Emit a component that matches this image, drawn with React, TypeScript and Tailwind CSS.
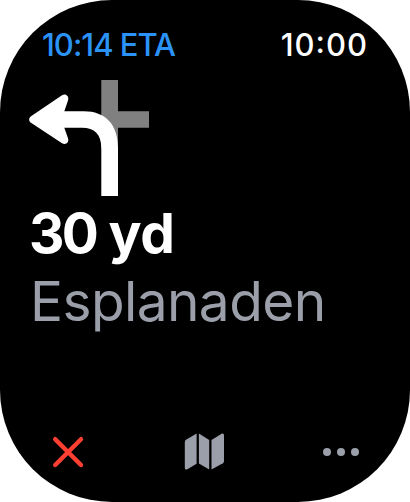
const TurnLeft = () => (
  <svg className="w-[122px] h-[118px]" viewBox="28 79 122 118" fill="none">
    <path d="M101.3 80H118V111.2H149V127.8H118V148H101.3Z" fill="#808080" />
    <path
      d="M101.3 196V148C101.3 134 94.5 127.7 82 127.7H64.3L68 138.3C69.5 142.8 65.5 145.4 62 143.2L31 122.8C28.6 121.2 28.6 117.8 31 116.2L62 95.3C65.5 93.2 69.5 96 68 100.6L64.3 111.2H84C105 111.2 118 124 118 148V196Z"
      fill="#fff"
    />
  </svg>
)

const Close = () => (
  <svg className="w-[34px] h-[34px]" viewBox="0 0 34 34" stroke="#ff3f32" strokeWidth="4.4" strokeLinecap="round">
    <path d="M4.2 4.2L30 30M30 4.2L4.2 30" />
  </svg>
)

const MapIcon = () => (
  <svg className="w-[40px] h-[38px]" viewBox="0 0 40 38" fill="#9b9fa9">
    <path d="M12.6 .6V30.7L3.4 36.2C1.9 37 .8 36.4 .8 34.7V9C.8 8 1.2 7.2 2 6.7Z" />
    <path d="M14.9 .6L25.2 7V36.6L14.9 30.6Z" />
    <path d="M27.5 7L37.2 1C38.8 .1 40 .8 40 2.5V28C40 29 39.7 29.8 38.9 30.3L27.5 36.6Z" />
  </svg>
)

const More = () => (
  <div className="flex gap-[6px]">
    <div className="w-2 h-2 rounded-full bg-[#9b9fa9]" />
    <div className="w-2 h-2 rounded-full bg-[#9b9fa9]" />
    <div className="w-2 h-2 rounded-full bg-[#9b9fa9]" />
  </div>
)

const App = () => {
  return (
    <div className="w-[410px] h-[502px] bg-white font-['Inter',sans-serif]">
      <div className="w-full h-full flex flex-col bg-black rounded-[112px] overflow-hidden">
        <div className="flex justify-between pl-[42px] pr-[42px] pt-[25px] text-[31px] leading-[40px] font-medium">
          <p className="text-[#2b93f5] tracking-[-1px]">10:14 ETA</p>
          <p className="flex text-white tracking-[1px]">
            10<span className="-mt-[3px] mb-[3px]">:</span>00
          </p>
        </div>

        <div className="pl-7 pt-[14px]">
          <TurnLeft />
          <p className="mt-[3px] ml-[1px] text-[55px] leading-[66px] font-bold text-white">
            <span className="tracking-[-2.8px]">30</span>
            <span className="tracking-[-0.5px]"> yd</span>
          </p>
          <p className="mt-[1px] ml-[2px] text-[55px] leading-[68px] tracking-[-0.6px] text-[#9b9fa9]">Esplanaden</p>
        </div>

        <div className="mt-auto pb-[31px] pl-[51px] pr-[51px] flex items-center justify-between">
          <Close />
          <MapIcon />
          <More />
        </div>
      </div>
    </div>
  )
}

export default App
